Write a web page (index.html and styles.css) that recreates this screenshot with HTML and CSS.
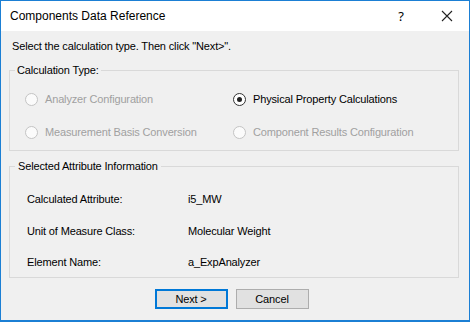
FILE: index.html
```html
<!DOCTYPE html>
<html>
<head>
<meta charset="utf-8">
<link rel="stylesheet" href="styles.css">
</head>
<body>
<div class="window">
  <div class="titlebar">
    <span class="title">Components Data Reference</span>
    <span class="help">?</span>
    <span class="close"><svg width="12" height="12" viewBox="0 0 12 12"><path d="M1 1 L11 11 M11 1 L1 11" stroke="#222" stroke-width="1.1" fill="none"/></svg></span>
  </div>
  <div class="content">
    <p class="intro">Select the calculation type. Then click "Next&gt;".</p>
    <fieldset class="group calc">
      <legend>Calculation Type:</legend>
      <div class="radios">
        <label class="radio disabled"><span class="dot"></span><span>Analyzer Configuration</span></label>
        <label class="radio checked"><span class="dot"></span><span>Physical Property Calculations</span></label>
        <label class="radio disabled"><span class="dot"></span><span>Measurement Basis Conversion</span></label>
        <label class="radio disabled"><span class="dot"></span><span>Component Results Configuration</span></label>
      </div>
    </fieldset>
    <fieldset class="group info">
      <legend>Selected Attribute Information</legend>
      <div class="rows">
        <span class="key">Calculated Attribute:</span><span class="val">i5_MW</span>
        <span class="key">Unit of Measure Class:</span><span class="val">Molecular Weight</span>
        <span class="key">Element Name:</span><span class="val">a_ExpAnalyzer</span>
      </div>
    </fieldset>
    <div class="buttons">
      <button class="btn default">Next &gt;</button>
      <button class="btn">Cancel</button>
    </div>
  </div>
</div>
</body>
</html>
```
FILE: styles.css
```css
html, body {
  margin: 0;
  padding: 0;
  background: #f0f0f0;
}
.window {
  width: 470px;
  height: 322px;
  box-sizing: border-box;
  border: 1px solid #1b7fd4;
  border-right-width: 1px;
  border-bottom-width: 2px;
  background: #f0f0f0;
  display: flex;
  flex-direction: column;
  font-family: "Liberation Sans", Arial, sans-serif;
  font-size: 11px;
  letter-spacing: -0.15px;
  color: #000;
}
.titlebar {
  height: 30px;
  background: #fff;
  display: flex;
  align-items: center;
  padding-left: 9px;
  flex-shrink: 0;
}
.title {
  font-family: "Liberation Sans", Arial, sans-serif;
  font-size: 12px;
  letter-spacing: 0;
  color: #000;
  flex: 1;
}
.help {
  font-family: "Noto Sans", sans-serif;
  font-size: 13px;
  width: 12px;
  text-align: center;
  margin-right: 34px;
}
.close {
  width: 12px;
  height: 12px;
  margin-right: 16px;
  display: flex;
}
.content {
  padding: 9px 10px 0 8px;
}
.intro {
  margin: 0;
  padding-left: 3px;
  line-height: 13px;
}
.group {
  margin: 11px 0 0 0;
  border: 1px solid #d9d9d9;
  padding: 0 5px;
}
.group legend {
  padding: 0 2px;
  line-height: 13px;
}
.radios {
  display: grid;
  grid-template-columns: 208px 1fr;
  row-gap: 13px;
  padding: 12px 0 8px 10px;
}
.radio {
  display: flex;
  align-items: center;
  gap: 7px;
  height: 20px;
}
.radio.disabled {
  color: #a0a0a0;
}
.dot {
  width: 11px;
  height: 11px;
  border-radius: 50%;
  border: 1px solid #c4c4c4;
  background: #fbfbfb;
  position: relative;
  flex-shrink: 0;
}
.radio.checked .dot {
  border-color: #333;
  background: #fff;
}
.radio.checked .dot::after {
  content: "";
  position: absolute;
  left: 3px;
  top: 3px;
  width: 5px;
  height: 5px;
  border-radius: 50%;
  background: #222;
}
.info {
  margin-top: 9px;
}
.info legend {
  padding: 0 3px;
}
.rows {
  display: grid;
  grid-template-columns: 161px 1fr;
  grid-auto-rows: 20px;
  row-gap: 11.5px;
  align-items: center;
  padding: 16px 0 5px 12px;
}
.buttons {
  display: flex;
  justify-content: center;
  gap: 8px;
  margin-top: 11px;
  padding-right: 5px;
}
.btn {
  font-family: "Liberation Sans", Arial, sans-serif;
  font-size: 11px;
  letter-spacing: -0.15px;
  height: 20px;
  width: 73px;
  background: #e1e1e1;
  border: 1px solid #adadad;
  padding: 0;
  color: #000;
}
.btn.default {
  border: 1px solid #0078d7;
  box-shadow: inset 0 0 0 1px #0078d7;
}
```
